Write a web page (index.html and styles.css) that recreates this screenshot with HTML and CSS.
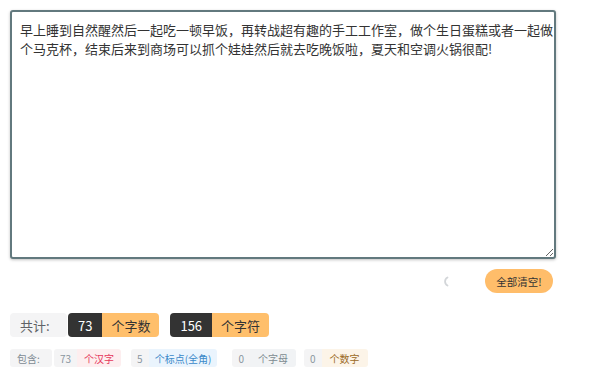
FILE: index.html
```html
<!DOCTYPE html>
<html lang="zh-CN">
<head>
  <meta charset="UTF-8">
  <title>字数统计</title>
  <link rel="stylesheet" href="styles.css">
</head>
<body>
  <textarea class="editor">早上睡到自然醒然后一起吃一顿早饭，再转战超有趣的手工工作室，做个生日蛋糕或者一起做个马克杯，结束后来到商场可以抓个娃娃然后就去吃晚饭啦，夏天和空调火锅很配!</textarea>

  <div class="actions">
    <svg class="spinner" width="8" height="11" viewBox="0 0 8 11">
      <path d="M6.5 1.5 A4.5 4.5 0 0 0 6.5 9.5" fill="none" stroke="#d3d6d9" stroke-width="1.8" stroke-linecap="round"/>
    </svg>
    <button class="btn-clear">全部清空!</button>
  </div>

  <div class="total">
    <span class="tag tag-label">共计:</span>
    <span class="pair">
      <span class="tag tag-dark">73</span><span class="tag tag-orange">个字数</span>
    </span>
    <span class="pair">
      <span class="tag tag-dark">156</span><span class="tag tag-orange">个字符</span>
    </span>
  </div>

  <div class="detail">
    <span class="mini mini-label">包含:</span>
    <span class="group">
      <span class="mini mini-num">73</span><span class="mini mini-red">个汉字</span>
    </span>
    <span class="group">
      <span class="mini mini-num">5</span><span class="mini mini-blue">个标点(全角)</span>
    </span>
    <span class="group wide">
      <span class="mini mini-num">0</span><span class="mini mini-grey">个字母</span>
    </span>
    <span class="group">
      <span class="mini mini-num">0</span><span class="mini mini-yellow">个数字</span>
    </span>
  </div>
</body>
</html>
```

FILE: styles.css
```css
body {
  margin: 0;
  padding: 10px;
  font-family: "Noto Sans CJK SC", "Noto Sans", sans-serif;
  color: #333;
  background: #fff;
}

.editor {
  display: block;
  box-sizing: border-box;
  width: 546px;
  height: 249px;
  padding: 8px 1px 8px 8px;
  border: 2px solid #62797e;
  border-radius: 3px;
  box-shadow: 0 1px 3px rgba(0, 0, 0, 0.25);
  font-family: inherit;
  font-size: 13px;
  line-height: 19px;
  color: #333;
  outline: none;
  overflow: hidden;
}

.actions {
  width: 543px;
  margin-top: 10px;
  display: flex;
  justify-content: flex-end;
  align-items: center;
  gap: 36px;
  height: 24px;
}

.spinner {
  display: block;
}

.btn-clear {
  height: 24px;
  width: 68px;
  padding: 0;
  border: none;
  border-radius: 12px;
  background-color: #ffbd6a;
  color: #333;
  font-family: inherit;
  font-size: 10.5px;
  cursor: pointer;
}

.total {
  margin-top: 20px;
  display: flex;
  align-items: center;
}

.tag {
  display: inline-flex;
  align-items: center;
  height: 24px;
  padding: 0 9px;
  font-size: 13px;
  box-sizing: border-box;
}

.tag-label {
  width: 57px;
  background: #f4f4f5;
  color: #606266;
  border-radius: 4px;
  padding-left: 10px;
}

.pair {
  display: inline-flex;
  margin-left: 1px;
  margin-right: 10px;
}

.tag-dark {
  background: #333;
  color: #fff;
  border-radius: 4px 0 0 4px;
  padding: 0 10px;
}

.tag-orange {
  background: #ffbf6b;
  color: #333;
  border-radius: 0 4px 4px 0;
  width: 57px;
}

.detail {
  margin-top: 12px;
  display: flex;
  align-items: center;
}

.mini {
  display: inline-flex;
  align-items: center;
  height: 18px;
  padding: 0 6px;
  font-size: 10px;
  box-sizing: border-box;
}

.mini-label {
  width: 42px;
  background: #f4f4f5;
  color: #7d8a93;
  border-radius: 3px;
  padding-left: 7px;
}

.group {
  display: inline-flex;
  margin-left: 2px;
  margin-right: 8px;
}

.group.wide {
  margin-left: 7px;
  margin-right: 6px;
}

.mini-num {
  background: #f4f4f5;
  color: #8a96a0;
  border-radius: 3px 0 0 3px;
  padding: 0 6px;
}

.mini-red {
  background: #fdeeef;
  color: #e6365a;
  border-radius: 0 3px 3px 0;
  padding: 0 7px;
}

.mini-blue {
  background: #eaf4fd;
  color: #3a89c9;
  border-radius: 0 3px 3px 0;
  padding: 0 6px;
}

.mini-grey {
  background: #f1f3f5;
  color: #7d8b91;
  border-radius: 0 3px 3px 0;
  padding: 0 8px;
}

.mini-yellow {
  background: #fcf4e8;
  color: #9b6a25;
  border-radius: 0 3px 3px 0;
  padding: 0 8px;
}
```
